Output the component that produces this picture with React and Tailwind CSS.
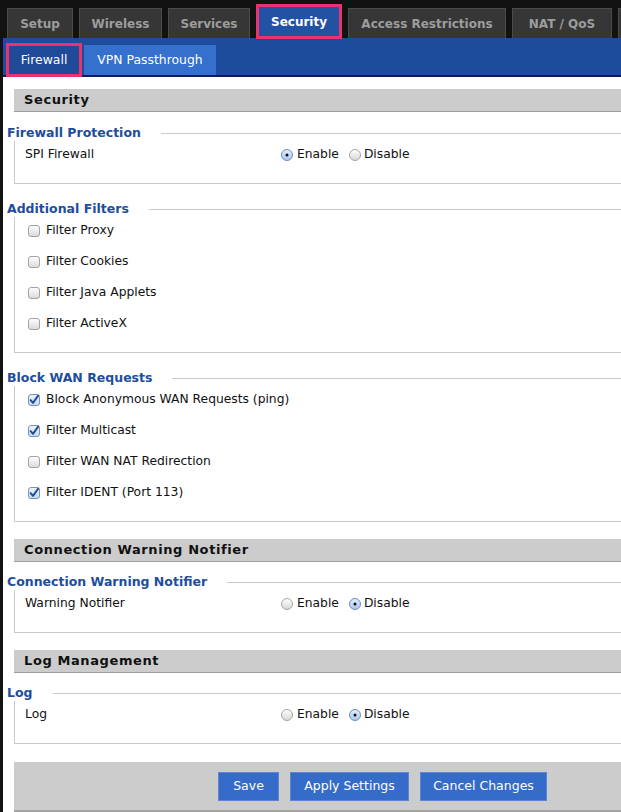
import React from 'react';

const topTabs = [
  { label: 'Setup', w: 'w-[66px]' },
  { label: 'Wireless', w: 'w-[83px]' },
  { label: 'Services', w: 'w-[82px]' },
  { label: 'Security', w: 'w-[86px]', active: true },
  { label: 'Access Restrictions', w: 'w-[158px]' },
  { label: 'NAT / QoS', w: 'w-[100px]' },
  { label: '', w: 'w-[140px]' },
];

function Checkbox({ on }) {
  return (
    <svg width="12" height="12" viewBox="0 0 12 12" className="shrink-0 overflow-visible">
      <defs>
        <linearGradient id="cbg" x1="0" y1="0" x2="0" y2="1">
          <stop offset="0" stopColor="#ffffff" />
          <stop offset="1" stopColor="#d9d9d9" />
        </linearGradient>
        <linearGradient id="cbon" x1="0" y1="0" x2="0" y2="1">
          <stop offset="0" stopColor="#eef4fc" />
          <stop offset="1" stopColor="#c4d8f2" />
        </linearGradient>
      </defs>
      <rect x="0.5" y="0.5" width="11" height="11" rx="2.5" fill={on ? 'url(#cbon)' : 'url(#cbg)'} stroke={on ? '#7c93b8' : '#a3a3a3'} />
      {on && <path d="M2.6 6.1 L5 8.9 L10.2 1.6" fill="none" stroke="#1f4d94" strokeWidth="1.9" strokeLinecap="round" strokeLinejoin="round" />}
    </svg>
  );
}

function Radio({ on }) {
  return (
    <svg width="12" height="12" viewBox="0 0 12 12" className="shrink-0">
      <defs>
        <linearGradient id="rbg" x1="0" y1="0" x2="0" y2="1">
          <stop offset="0" stopColor="#ffffff" />
          <stop offset="1" stopColor="#d6d6d6" />
        </linearGradient>
        <linearGradient id="rbon" x1="0" y1="0" x2="0" y2="1">
          <stop offset="0" stopColor="#e4eefb" />
          <stop offset="1" stopColor="#a9c7ee" />
        </linearGradient>
      </defs>
      <circle cx="6" cy="6" r="5.5" fill={on ? 'url(#rbon)' : 'url(#rbg)'} stroke={on ? '#6f8fbd' : '#a6a6a6'} />
      {on && <circle cx="6" cy="6" r="1.5" fill="#111" />}
    </svg>
  );
}

function SectionHeader({ title, className }) {
  return (
    <div className={`ml-[11px] flex h-[23px] items-center border-b border-[#9e9e9e] bg-[#cccccc] pl-[10px] text-[13px] font-bold tracking-[0.6px] text-[#111] ${className}`}>
      {title}
    </div>
  );
}

function Fieldset({ legend, className, children }) {
  return (
    <div className={`ml-[11px] border border-r-0 border-[#c9c9c9] pb-[13px] ${className}`}>
      <div className="-ml-[9px] -mt-[9px] h-[16px] w-fit bg-white pl-[1px] pr-[20px] text-[12.5px] font-bold leading-[16px] text-[#1d4d9b]">
        {legend}
      </div>
      <div className="-mt-[2px]">{children}</div>
    </div>
  );
}

function RadioRow({ label, enabled }) {
  return (
    <div className="flex h-[31px] items-center pl-[10px]">
      <span className="w-[256px]">{label}</span>
      <Radio on={enabled} />
      <span className="ml-[4px]">Enable</span>
      <span className="ml-[10px]"><Radio on={!enabled} /></span>
      <span className="ml-[3px]">Disable</span>
    </div>
  );
}

function CheckRow({ label, on }) {
  return (
    <div className="flex h-[31px] items-center gap-[6px] pl-[13px]">
      <Checkbox on={on} />
      <span>{label}</span>
    </div>
  );
}

export default function App() {
  return (
    <div className="h-[812px] w-[621px] overflow-hidden bg-[#121212] font-['DejaVu_Sans',sans-serif] text-[12.3px] text-[#111]">
      {/* top tabs */}
      <div className="flex h-[38px] items-end gap-[6px] whitespace-nowrap pl-[7px]">
        {topTabs.map((t, idx) =>
          t.active ? (
            <div
              key={idx}
              className={`${t.w} relative z-10 -mb-[1px] flex h-[35px] shrink-0 items-center justify-center border-[3px] border-[#e8336e] bg-[#2152a3] text-[12px] font-bold text-white`}
            >
              {t.label}
            </div>
          ) : (
            <div
              key={idx}
              className={`${t.w} flex h-[30px] shrink-0 items-center justify-center border border-b-0 border-[#4b4b4b] bg-[#363636] text-[12px] font-bold text-[#9d9d9d]`}
            >
              {t.label}
            </div>
          )
        )}
      </div>

      <div className="ml-[3px]">
        {/* sub tabs */}
        <div className="flex h-[39px] items-end gap-[2px] border-b-2 border-[#0f2246] bg-[#1d4c9c] pl-[3px]">
          <div className="relative z-10 -mb-[2px] flex h-[34px] w-[76px] items-center justify-center border-[3px] border-[#e8336e] bg-[#1e4a98] text-[12.4px] text-white">
            Firewall
          </div>
          <div className="flex h-[30px] w-[132px] items-center justify-center bg-[#3570cc] text-[12.4px] text-white">
            VPN Passthrough
          </div>
        </div>

        {/* content */}
        <div className="bg-white pt-[12px]">
          <SectionHeader title="Security" />

          <Fieldset legend="Firewall Protection" className="mt-[21px]">
            <RadioRow label="SPI Firewall" enabled />
          </Fieldset>

          <Fieldset legend="Additional Filters" className="mt-[25px]">
            <CheckRow label="Filter Proxy" />
            <CheckRow label="Filter Cookies" />
            <CheckRow label="Filter Java Applets" />
            <CheckRow label="Filter ActiveX" />
          </Fieldset>

          <Fieldset legend="Block WAN Requests" className="mt-[25px]">
            <CheckRow label="Block Anonymous WAN Requests (ping)" on />
            <CheckRow label="Filter Multicast" on />
            <CheckRow label="Filter WAN NAT Redirection" />
            <CheckRow label="Filter IDENT (Port 113)" on />
          </Fieldset>

          <SectionHeader title="Connection Warning Notifier" className="mt-[17px]" />
          <Fieldset legend="Connection Warning Notifier" className="mt-[20px]">
            <RadioRow label="Warning Notifier" enabled={false} />
          </Fieldset>

          <SectionHeader title="Log Management" className="mt-[17px]" />
          <Fieldset legend="Log" className="mt-[20px]">
            <RadioRow label="Log" enabled={false} />
          </Fieldset>

          {/* buttons */}
          <div className="ml-[11px] mt-[18px] flex h-[50px] gap-[11px] border-b-2 border-[#a3a3a3] bg-[#cccccc] pl-[204px] pt-[10px]">
            <button className="h-[29px] w-[61px] border border-[#5c86d2] bg-[#356bc9] text-[12.5px] text-white">Save</button>
            <button className="h-[29px] w-[119px] border border-[#5c86d2] bg-[#356bc9] text-[12.5px] text-white">Apply Settings</button>
            <button className="h-[29px] w-[127px] border border-[#5c86d2] bg-[#356bc9] text-[12.5px] text-white">Cancel Changes</button>
          </div>
        </div>
      </div>
    </div>
  );
}
